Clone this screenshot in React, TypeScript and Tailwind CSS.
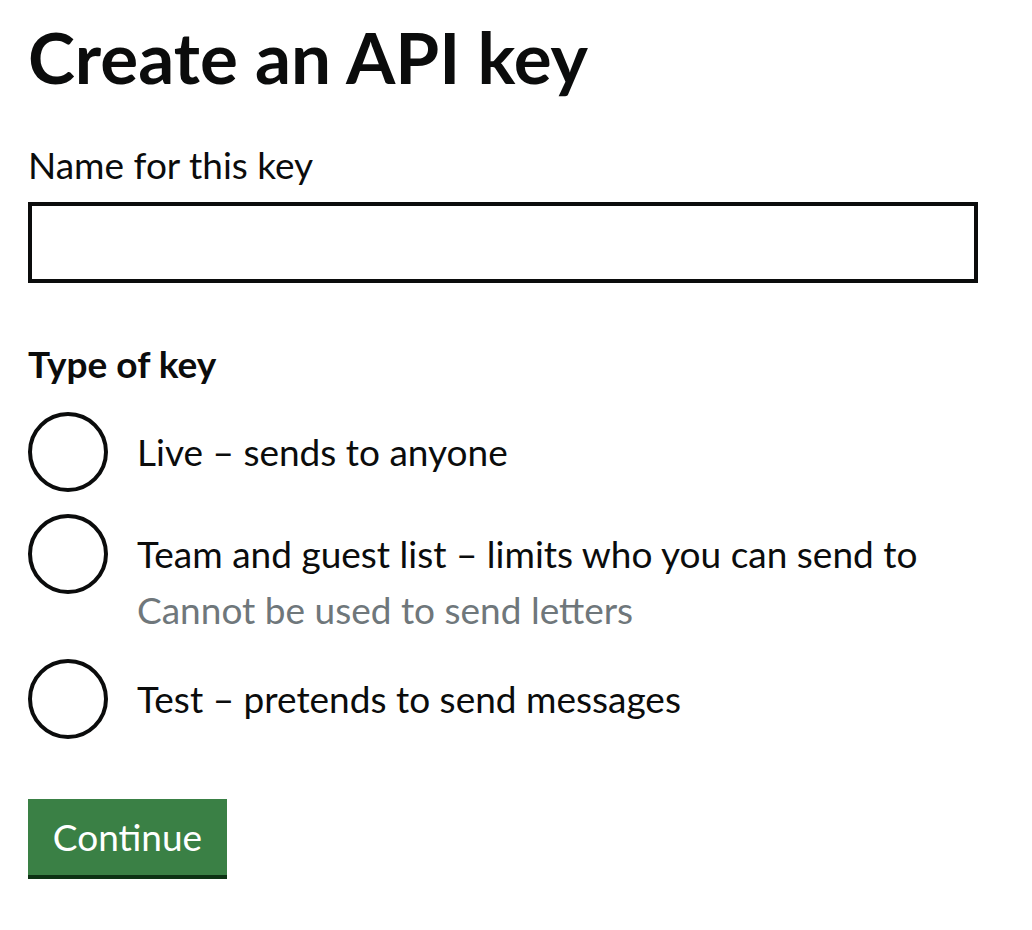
export default function App() {
    const options = [
        { label: "Live – sends to anyone" },
        { label: "Team and guest list – limits who you can send to", hint: "Cannot be used to send letters" },
        { label: "Test – pretends to send messages" },
    ]
    return (
        <div className="min-h-screen bg-white px-[28px] pt-[17px] text-[#0b0c0c] font-['Lato',sans-serif]">
            <h1 className="text-[71px] leading-[80px] font-bold">Create an API key</h1>
            <label className="mt-[43px] block text-[37px] leading-[50px]">Name for this key</label>
            <input type="text" className="mt-[12px] block h-[81px] w-[950px] border-4 border-[#0b0c0c] outline-none px-2 text-[37px]" />
            <fieldset className="mt-[56px]">
                <div className="text-[37px] leading-[50px] font-bold">Type of key</div>
                <div className="mt-[23px] flex flex-col">
                    {options.map((o, i) => (
                        <div key={i} className={`flex items-start ${i === 0 ? "mb-[22px]" : i === 1 ? "mb-[24px]" : ""}`}>
                            <span className="h-[80px] w-[80px] shrink-0 rounded-full border-4 border-[#0b0c0c]" />
                            <div className="pl-[29px] pt-[15px]">
                                <div className="text-[37px] leading-[50px]">{o.label}</div>
                                {o.hint && <div className="mt-[6px] text-[37px] leading-[50px] text-[#6f777b]">{o.hint}</div>}
                            </div>
                        </div>
                    ))}
                </div>
            </fieldset>
            <button className="mt-[60px] h-[76px] w-[199px] bg-[#3a8045] text-[37px] leading-[50px] text-white shadow-[0_4px_0_#0d3214]">
                Continue
            </button>
        </div>
    )
}
